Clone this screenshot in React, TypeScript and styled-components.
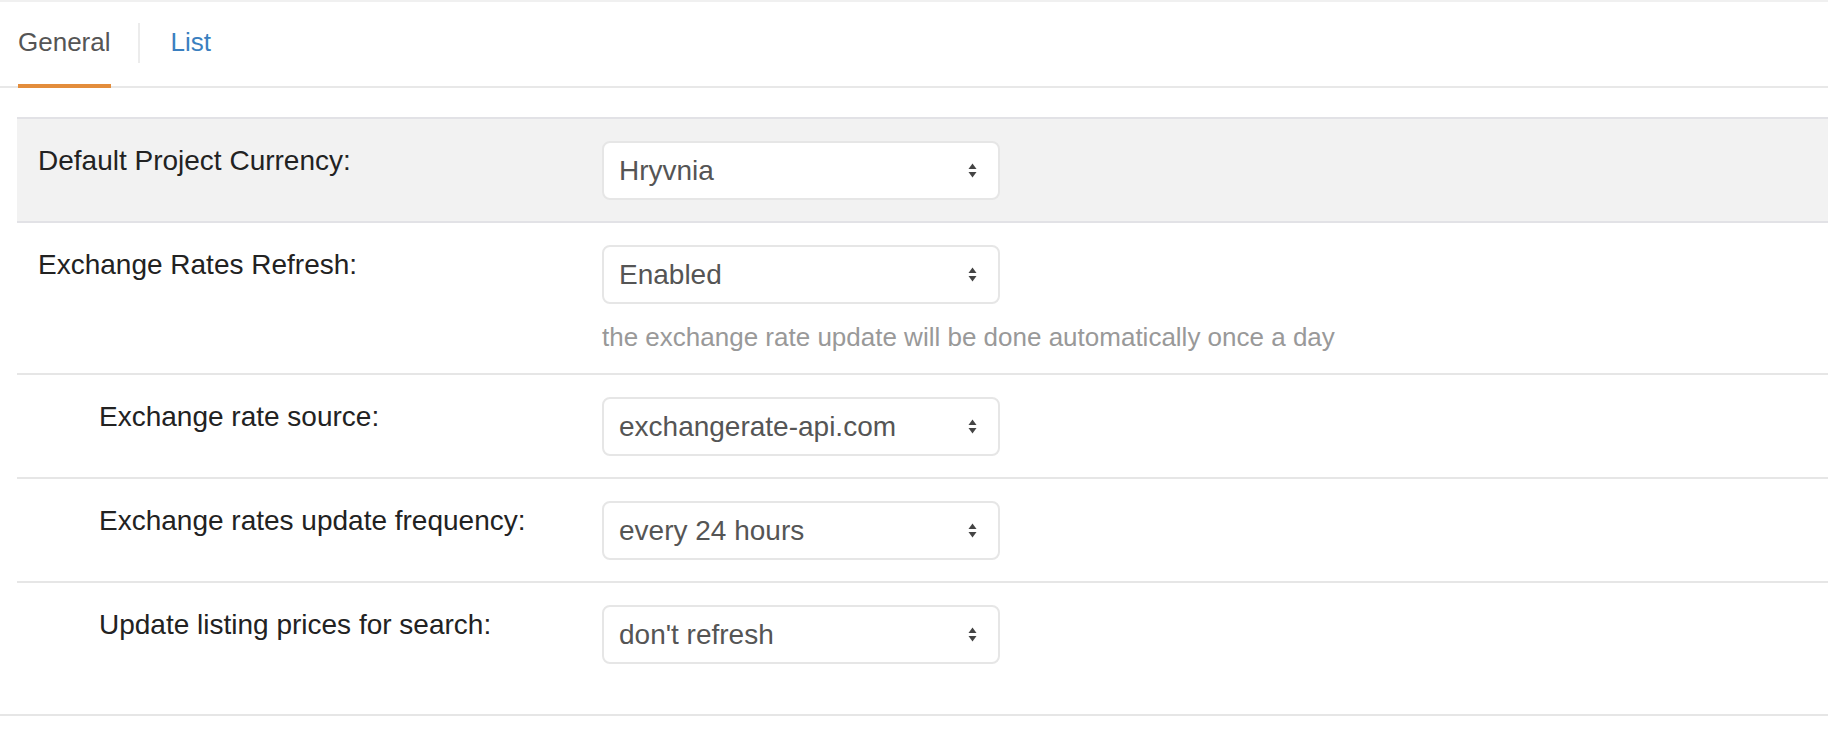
import { FC } from "react"
import { styled, createGlobalStyle } from "styled-components"

const GlobalStyle = createGlobalStyle`
  html, body {
    margin: 0;
    padding: 0;
    background: #fff;
    font-family: "Liberation Sans", Arial, Helvetica, sans-serif;
  }
`

type Setting = {
  label: string
  value: string
  nested?: boolean
  highlight?: boolean
  help?: string
}

const settings: Setting[] = [
  { label: "Default Project Currency:", value: "Hryvnia", highlight: true },
  {
    label: "Exchange Rates Refresh:",
    value: "Enabled",
    help: "the exchange rate update will be done automatically once a day",
  },
  { label: "Exchange rate source:", value: "exchangerate-api.com", nested: true },
  { label: "Exchange rates update frequency:", value: "every 24 hours", nested: true },
  { label: "Update listing prices for search:", value: "don't refresh", nested: true },
]

const Arrows: FC = () => (
  <svg width="9" height="15" viewBox="0 0 9 15">
    <path d="M4.5 0.5 L8.5 6 L0.5 6 Z" fill="#444" />
    <path d="M0.5 9 L8.5 9 L4.5 14.5 Z" fill="#444" />
  </svg>
)

const App: FC = (): JSX.Element => {
  return (
    <Page>
      <GlobalStyle />
      <TopEdge />

      <TabBar>
        <Tab $active>General</Tab>
        <TabDivider />
        <Tab>List</Tab>
      </TabBar>

      <Form>
        <RowList>
          {settings.map((s, i) => (
            <Row key={s.label} $highlight={s.highlight} $last={i === settings.length - 1}>
              <Label $nested={s.nested}>{s.label}</Label>

              <Control>
                <SelectBox>
                  <span>{s.value}</span>
                  <Arrows />
                </SelectBox>

                {s.help && <Help>{s.help}</Help>}
              </Control>
            </Row>
          ))}
        </RowList>
      </Form>
    </Page>
  )
}

const Page = styled.div`
  width: 100%;
  min-height: 746px;
`

const TopEdge = styled.div`
  height: 2px;
  background-color: #f0f0f0;
`

const TabBar = styled.div`
  display: flex;
  height: 84px;
  padding-left: 18px;
  border-bottom: 2px solid #e8e8e8;
`

const Tab = styled.div<{ $active?: boolean }>`
  display: flex;
  align-items: center;
  margin-bottom: -2px;
  padding-bottom: 2px;
  font-size: 26px;
  color: ${(p) => (p.$active ? "#555" : "#3a7fc0")};
  border-bottom: 4px solid ${(p) => (p.$active ? "#e38d3c" : "transparent")};
`

const TabDivider = styled.div`
  width: 2px;
  height: 40px;
  margin: 21px 31px 0 27px;
  background-color: #ececec;
`

const Form = styled.div`
  margin-top: 29px;
  border-bottom: 2px solid #e6e6e6;
`

const RowList = styled.div`
  margin-left: 17px;
`

const Row = styled.div<{ $highlight?: boolean; $last?: boolean }>`
  display: grid;
  grid-template-columns: 585px 398px;
  align-items: start;
  padding: 22px 0 ${(p) => (p.$last ? "50px" : "21px")};
  background-color: ${(p) => (p.$highlight ? "#f2f2f2" : "transparent")};
  border-top: ${(p) => (p.$highlight ? "2px solid #e2e2e6" : "none")};
  border-bottom: ${(p) => (p.$last ? "none" : p.$highlight ? "2px solid #e2e2e6" : "2px solid #e6e6e6")};

  &:nth-child(2) {
    padding-bottom: 17px;
  }
`

const Label = styled.div<{ $nested?: boolean }>`
  padding-left: ${(p) => (p.$nested ? "82px" : "21px")};
  font-size: 28px;
  line-height: 40px;
  color: #222;
`

const Control = styled.div`
  display: flex;
  flex-direction: column;
`

const SelectBox = styled.div`
  box-sizing: border-box;
  display: flex;
  align-items: center;
  justify-content: space-between;
  width: 398px;
  height: 59px;
  padding: 0 21px 0 15px;
  font-size: 28px;
  color: #555;
  background-color: #fff;
  border: 2px solid #e6e6e6;
  border-radius: 8px;
`

const Help = styled.div`
  margin-top: 14px;
  font-size: 26px;
  line-height: 38px;
  color: #999;
  white-space: nowrap;
`

export default App
